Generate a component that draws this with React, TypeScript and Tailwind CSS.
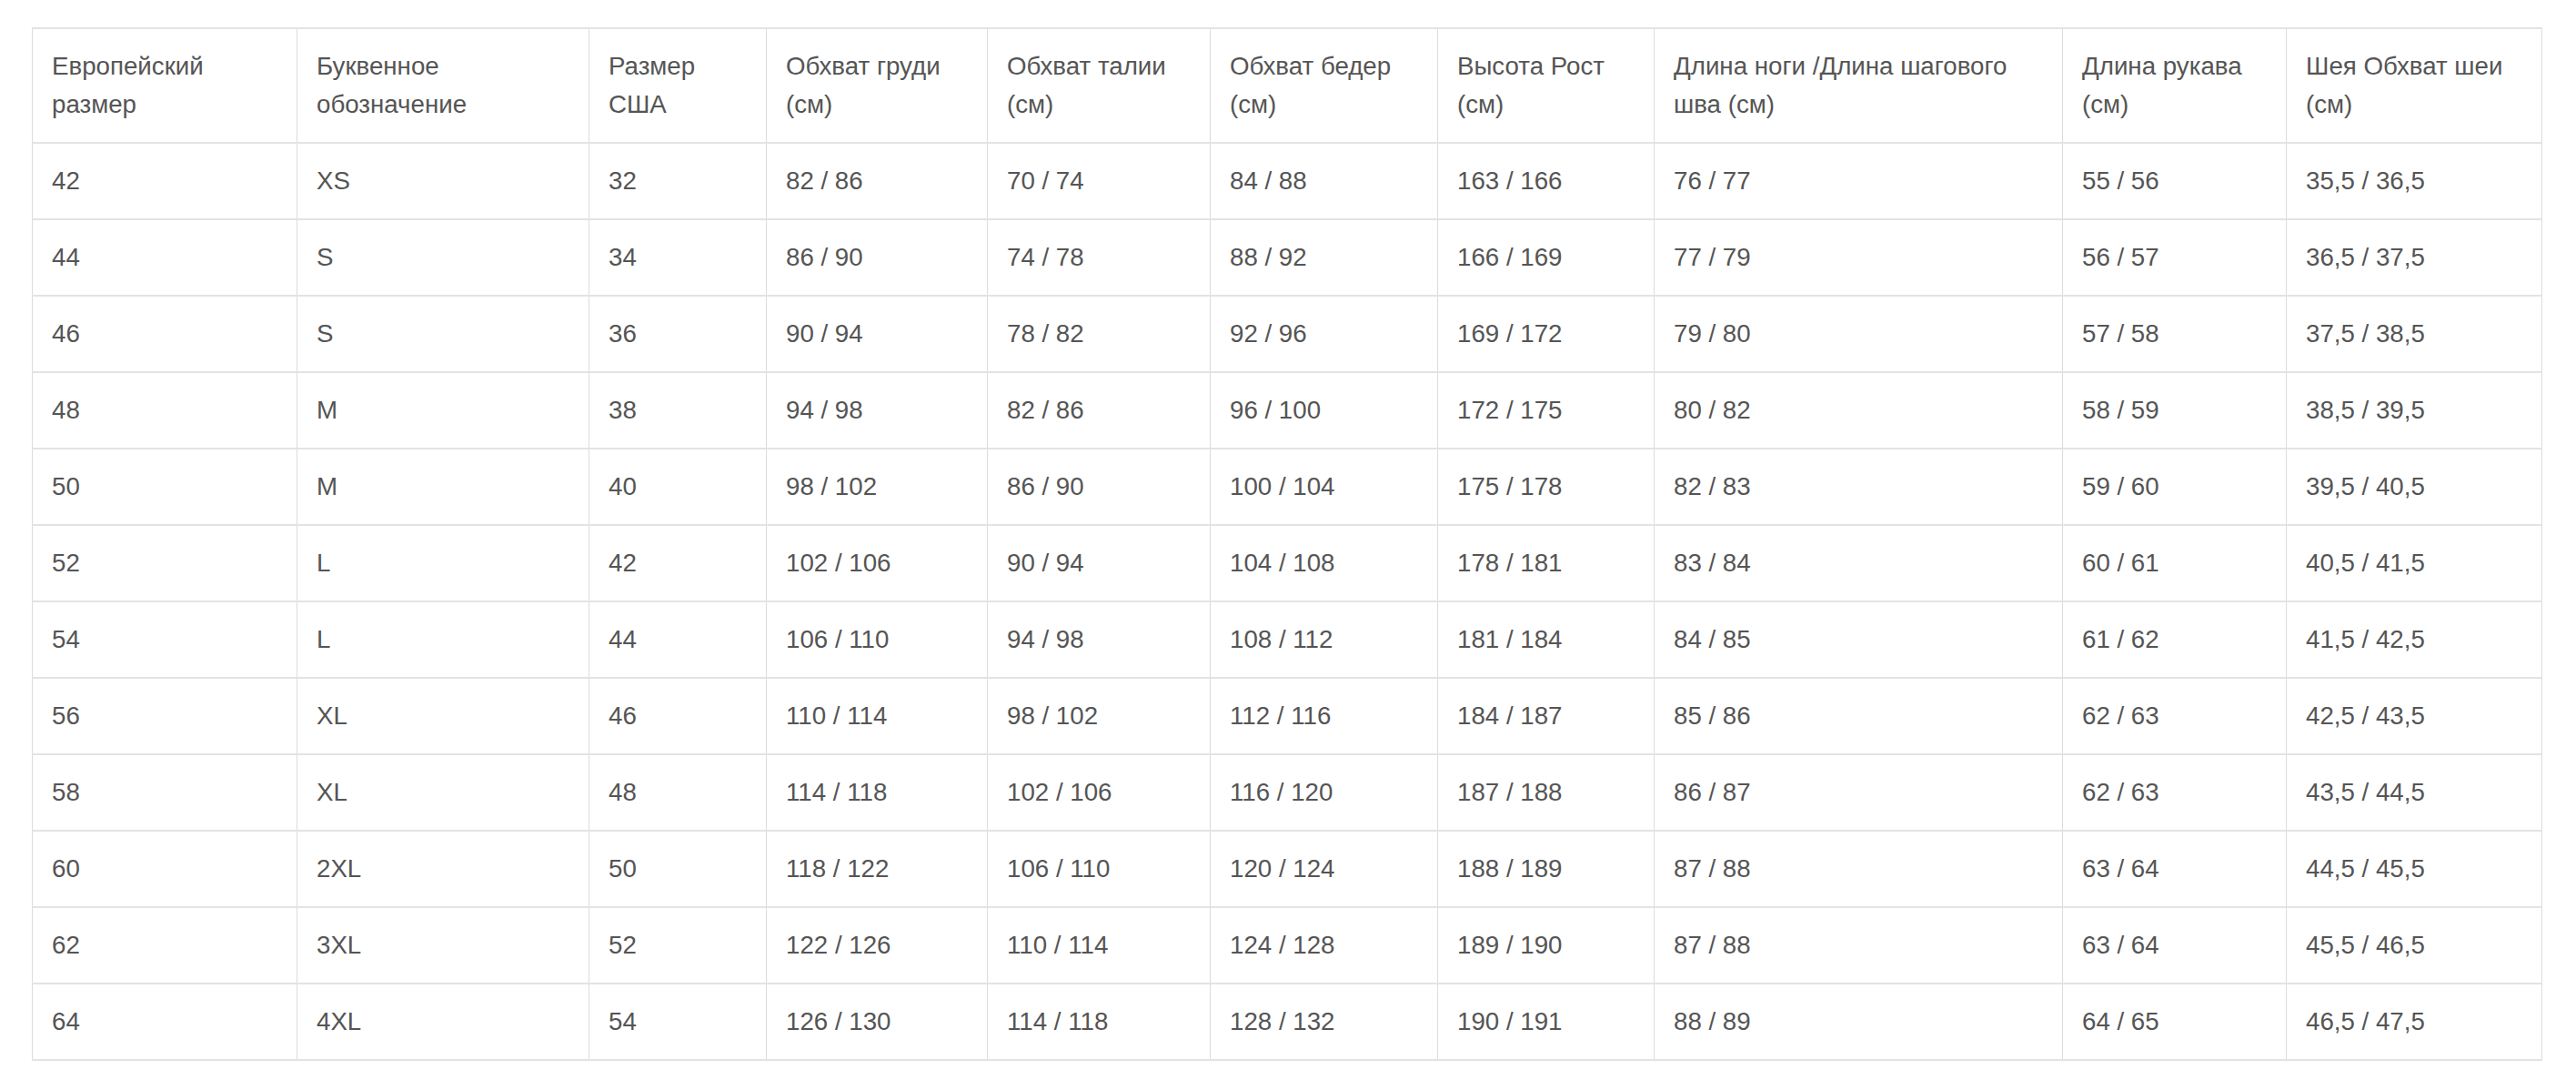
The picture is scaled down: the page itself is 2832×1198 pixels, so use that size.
const columns = [
  { w: 'w-[291px]', title: ['Европейский', 'размер'] },
  { w: 'w-[321px]', title: ['Буквенное', 'обозначение'] },
  { w: 'w-[195px]', title: ['Размер', 'США'] },
  { w: 'w-[243px]', title: ['Обхват груди', '(см)'] },
  { w: 'w-[245px]', title: ['Обхват талии', '(см)'] },
  { w: 'w-[250px]', title: ['Обхват бедер', '(см)'] },
  { w: 'w-[238px]', title: ['Высота Рост', '(см)'] },
  { w: 'w-[449px]', title: ['Длина ноги /Длина шагового', 'шва (см)'] },
  { w: 'w-[246px]', title: ['Длина рукава', '(см)'] },
  { w: 'w-[281px]', title: ['Шея Обхват шеи', '(см)'] },
];

const rows = [
  ['42', 'XS', '32', '82 / 86', '70 / 74', '84 / 88', '163 / 166', '76 / 77', '55 / 56', '35,5 / 36,5'],
  ['44', 'S', '34', '86 / 90', '74 / 78', '88 / 92', '166 / 169', '77 / 79', '56 / 57', '36,5 / 37,5'],
  ['46', 'S', '36', '90 / 94', '78 / 82', '92 / 96', '169 / 172', '79 / 80', '57 / 58', '37,5 / 38,5'],
  ['48', 'M', '38', '94 / 98', '82 / 86', '96 / 100', '172 / 175', '80 / 82', '58 / 59', '38,5 / 39,5'],
  ['50', 'M', '40', '98 / 102', '86 / 90', '100 / 104', '175 / 178', '82 / 83', '59 / 60', '39,5 / 40,5'],
  ['52', 'L', '42', '102 / 106', '90 / 94', '104 / 108', '178 / 181', '83 / 84', '60 / 61', '40,5 / 41,5'],
  ['54', 'L', '44', '106 / 110', '94 / 98', '108 / 112', '181 / 184', '84 / 85', '61 / 62', '41,5 / 42,5'],
  ['56', 'XL', '46', '110 / 114', '98 / 102', '112 / 116', '184 / 187', '85 / 86', '62 / 63', '42,5 / 43,5'],
  ['58', 'XL', '48', '114 / 118', '102 / 106', '116 / 120', '187 / 188', '86 / 87', '62 / 63', '43,5 / 44,5'],
  ['60', '2XL', '50', '118 / 122', '106 / 110', '120 / 124', '188 / 189', '87 / 88', '63 / 64', '44,5 / 45,5'],
  ['62', '3XL', '52', '122 / 126', '110 / 114', '124 / 128', '189 / 190', '87 / 88', '63 / 64', '45,5 / 46,5'],
  ['64', '4XL', '54', '126 / 130', '114 / 118', '128 / 132', '190 / 191', '88 / 89', '64 / 65', '46,5 / 47,5'],
];

const cell =
  'border-x border-x-[#dcdcdc] border-y-2 border-y-[#e3e3e3] pl-[21px] pr-[10px] align-middle text-left font-normal';

const App = () => {
  return (
    <div className="min-h-screen bg-white pt-[30px] pl-[35px] font-[family-name:'Liberation_Sans',Arial,sans-serif] text-[27.7px] leading-[42px] text-[#555555]">
      <table className="table-fixed border-collapse w-[2759px]">
        <colgroup>
          {columns.map((c, i) => (
            <col key={i} className={c.w} />
          ))}
        </colgroup>
        <thead>
          <tr>
            {columns.map((c, i) => (
              <th key={i} className={`${cell} h-[126px]`}>
                {c.title[0]}
                <br />
                {c.title[1]}
              </th>
            ))}
          </tr>
        </thead>
        <tbody>
          {rows.map((r, i) => (
            <tr key={i}>
              {r.map((v, j) => (
                <td key={j} className={`${cell} h-[84px]`}>
                  {v}
                </td>
              ))}
            </tr>
          ))}
        </tbody>
      </table>
    </div>
  );
};

export default App;
